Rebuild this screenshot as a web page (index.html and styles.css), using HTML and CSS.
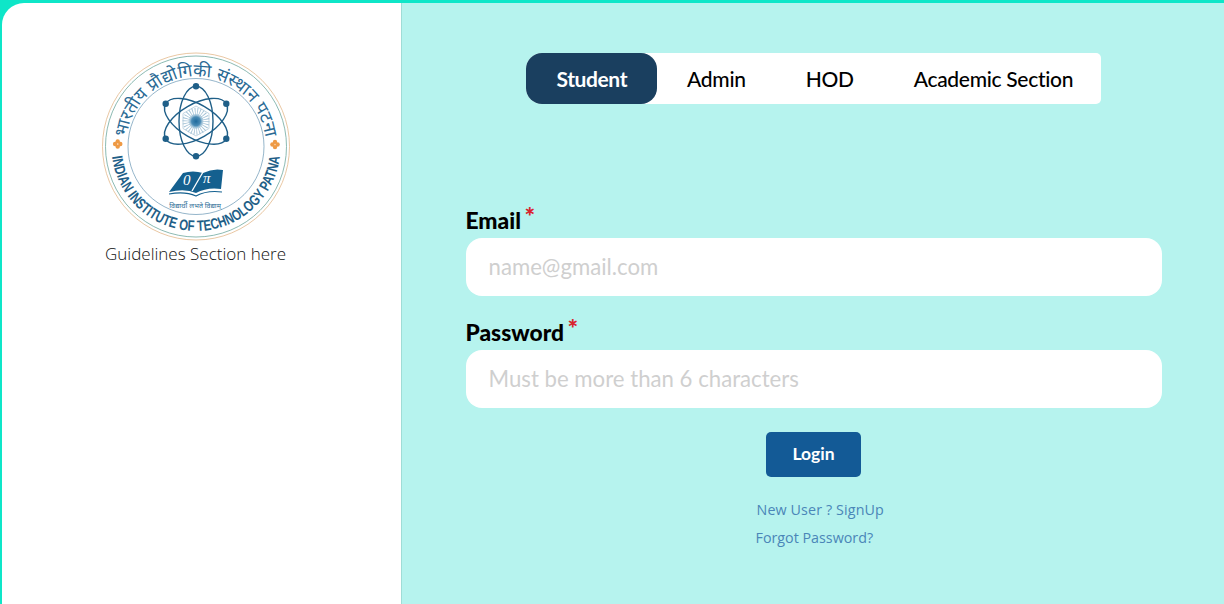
FILE: index.html
```html
<!DOCTYPE html>
<html lang="en">
<head>
  <meta charset="UTF-8" />
  <meta name="viewport" content="width=device-width, initial-scale=1" />
  <title>Login</title>
  <link rel="stylesheet" href="styles.css">
</head>
<body>
  <div class="page">
    <aside class="guide">
      <svg class="logo" viewBox="0 0 190 190" role="img" aria-label="IIT Patna logo">
        <defs>
          <path id="arcTop" d="M25 94.5 A70 70 0 0 1 165 94.5" />
          <path id="arcBottom" d="M10.5 94.5 A84.5 84.5 0 0 0 179.5 94.5" />
          <radialGradient id="hub">
            <stop offset="0" stop-color="#1f6a9c" />
            <stop offset="0.55" stop-color="#4a8bb5" />
            <stop offset="1" stop-color="#4a8bb5" stop-opacity="0" />
          </radialGradient>
          <g id="flower">
            <circle cx="0" cy="-2.6" r="2.2" />
            <circle cx="0" cy="2.6" r="2.2" />
            <circle cx="-2.6" cy="0" r="2.2" />
            <circle cx="2.6" cy="0" r="2.2" />
          </g>
        </defs>

        <!-- rings -->
        <circle cx="95" cy="94.5" r="93.5" fill="none" stroke="#e3b98c" stroke-width="0.8" />
        <circle cx="95" cy="94.5" r="90.5" fill="none" stroke="#6fa8a0" stroke-width="0.8" />
        <circle cx="95" cy="94.5" r="68" fill="none" stroke="#2a6a94" stroke-width="0.5" />

        <text class="logo-hindi"><textPath href="#arcTop" startOffset="50%" text-anchor="middle">भारतीय प्रौद्योगिकी संस्थान पटना</textPath></text>
        <text class="logo-english"><textPath href="#arcBottom" startOffset="50%" text-anchor="middle" textLength="245" lengthAdjust="spacingAndGlyphs">INDIAN INSTITUTE OF TECHNOLOGY PATNA</textPath></text>

        <g fill="#ee9a45">
          <use href="#flower" x="16.7" y="92" />
          <use href="#flower" x="174" y="92.5" />
        </g>

        <!-- atom -->
        <polygon class="wheel-rim" points="95,54 108,61.5 108,76.5 95,84 82,76.5 82,61.5" />
        <circle class="wheel-spokes" cx="95" cy="69.3" r="10" />
        <circle cx="95" cy="69.3" r="8" fill="url(#hub)" />
        <g fill="none" stroke="#1f5f88" stroke-width="1.4">
          <ellipse cx="95" cy="69.3" rx="17" ry="35" />
          <ellipse cx="95" cy="69.3" rx="17" ry="35" transform="rotate(60 95 69.3)" />
          <ellipse cx="95" cy="69.3" rx="17" ry="35" transform="rotate(-60 95 69.3)" />
        </g>
        <g fill="#1f5f88">
          <circle cx="95" cy="34.3" r="3.2" />
          <circle cx="95" cy="104.3" r="3.2" />
          <circle cx="64.7" cy="51.8" r="3.2" />
          <circle cx="125.3" cy="51.8" r="3.2" />
          <circle cx="64.7" cy="86.8" r="3.2" />
          <circle cx="125.3" cy="86.8" r="3.2" />
        </g>

        <!-- book -->
        <path d="M68 140 L82 121 Q92 118 102 121 Q112 116 122 118 L120 137 Q106 135 95 141 Q84 136 68 140 Z" fill="#14608f" />
        <path d="M102 120 L91 139" fill="none" stroke="#fff" stroke-width="1.3" />
        <path d="M68 142 Q84 139 95 144 Q106 138 121 140" fill="none" stroke="#14608f" stroke-width="1.2" />
        <text class="logo-book" x="82" y="132.5">0</text>
        <text class="logo-book" x="102" y="131">π</text>
        <text class="logo-motto" x="94" y="156" text-anchor="middle">विद्यार्थी लभते विद्याम्</text>
      </svg>
      <p class="guide-text">Guidelines Section here</p>
    </aside>

    <main class="login">
      <nav class="tabs">
        <a href="#" class="tab active">Student</a>
        <a href="#" class="tab">Admin</a>
        <a href="#" class="tab">HOD</a>
        <a href="#" class="tab">Academic Section</a>
      </nav>

      <form class="login-form">
        <label class="field-label" for="email">Email <span class="req">*</span></label>
        <input class="field" type="email" id="email" placeholder="name@gmail.com" />

        <label class="field-label" for="password">Password <span class="req">*</span></label>
        <input class="field" type="password" id="password" placeholder="Must be more than 6 characters" />

        <button class="btn-login" type="submit">Login</button>

        <div class="links">
          <a href="#" class="link-signup">New User ? SignUp</a>
          <a href="#">Forgot Password?</a>
        </div>
      </form>
    </main>
  </div>
</body>
</html>
```

FILE: styles.css
```css
/* Reset */
* {
  margin: 0; padding: 0; box-sizing: border-box;
}

html, body {
  height: 100%;
  overflow: hidden;
}

body {
  background: #0ee6c8;
  font-family: 'Lato', sans-serif;
  color: #000;
}

.page {
  height: 100vh;
  padding: 3px 0 0 2px;
  display: flex;
}

/* Left panel */
.guide {
  width: 400px;
  background: #fff;
  border-top-left-radius: 22px;
  border-right: 1px solid #9fdcd6;
  display: flex;
  flex-direction: column;
  align-items: center;
  padding: 49px 12px 0 0;
}
.logo {
  width: 190px;
  height: 190px;
  display: block;
}
.logo-hindi {
  font-family: 'Noto Sans', 'DejaVu Sans', sans-serif;
  font-size: 17.5px;
  fill: #2a6a94;
}
.logo-english {
  font-family: 'Liberation Sans', sans-serif;
  font-size: 15px;
  font-weight: 700;
  fill: #1f5f88;
}
.wheel-rim {
  fill: none;
  stroke: #a9c4d5;
  stroke-width: 0.7;
}
.wheel-spokes {
  fill: none;
  stroke: #a3c2d6;
  stroke-width: 7;
  stroke-dasharray: 0.8 1.6;
}
.logo-book {
  font-family: 'Liberation Serif', serif;
  font-style: italic;
  font-size: 15px;
  fill: #fff;
}
.logo-motto {
  font-family: 'Noto Sans', 'DejaVu Sans', sans-serif;
  font-size: 7px;
  fill: #2a6a94;
}
.guide-text {
  font-family: 'Open Sans', sans-serif;
  font-size: 17px;
  font-weight: 300;
  line-height: 24px;
  color: #111;
}

/* Right panel */
.login {
  flex: 1;
  background: #b6f3ee;
  display: flex;
  flex-direction: column;
  align-items: center;
  padding-top: 50px;
}

/* Tabs */
.tabs {
  display: flex;
  width: 575px;
  height: 51px;
  background: #fff;
  border-radius: 16px 5px 5px 16px;
}
.tab {
  display: flex;
  align-items: center;
  padding: 0 30px;
  font-size: 21px;
  font-weight: 500;
  letter-spacing: -0.3px;
  color: #000;
  text-decoration: none;
  white-space: nowrap;
}
.tab.active {
  background: #1a3f5f;
  color: #fff;
  font-weight: 700;
  letter-spacing: -0.4px;
  border-radius: 16px;
  padding-left: 31px;
}

/* Form */
.login-form {
  width: 696px;
  margin: 103px 0 0 1px;
  display: flex;
  flex-direction: column;
}
.field-label {
  font-size: 22.8px;
  font-weight: 900;
  line-height: 26px;
  margin-bottom: 5px;
}
.req {
  color: #d9232e;
  font-size: 25px;
  line-height: 0;
  margin-left: -2px;
  position: relative;
  top: -3px;
}
.field {
  height: 58px;
  border: none;
  border-radius: 16px;
  background: #fff;
  padding: 0 23px 2px;
  margin-bottom: 23px;
  font-family: 'Lato', sans-serif;
  font-size: 22.2px;
  outline: none;
}
.field::placeholder {
  color: #cfcfcf;
}

.btn-login {
  align-self: center;
  width: 95px;
  height: 45px;
  margin-top: 1px;
  padding-bottom: 3px;
  border: none;
  border-radius: 5px;
  background: #135a96;
  color: #fff;
  font-family: 'Lato', sans-serif;
  font-size: 17.5px;
  font-weight: 700;
  cursor: pointer;
}

.links {
  align-self: flex-start;
  margin: 23px 0 0 290px;
  display: flex;
  flex-direction: column;
  gap: 8px;
}
.links a {
  font-family: 'Open Sans', sans-serif;
  font-size: 14.3px;
  line-height: 20px;
  color: #4a86b8;
  text-decoration: none;
}
.links .link-signup {
  margin-left: 1px;
  letter-spacing: 0.12px;
}
```
